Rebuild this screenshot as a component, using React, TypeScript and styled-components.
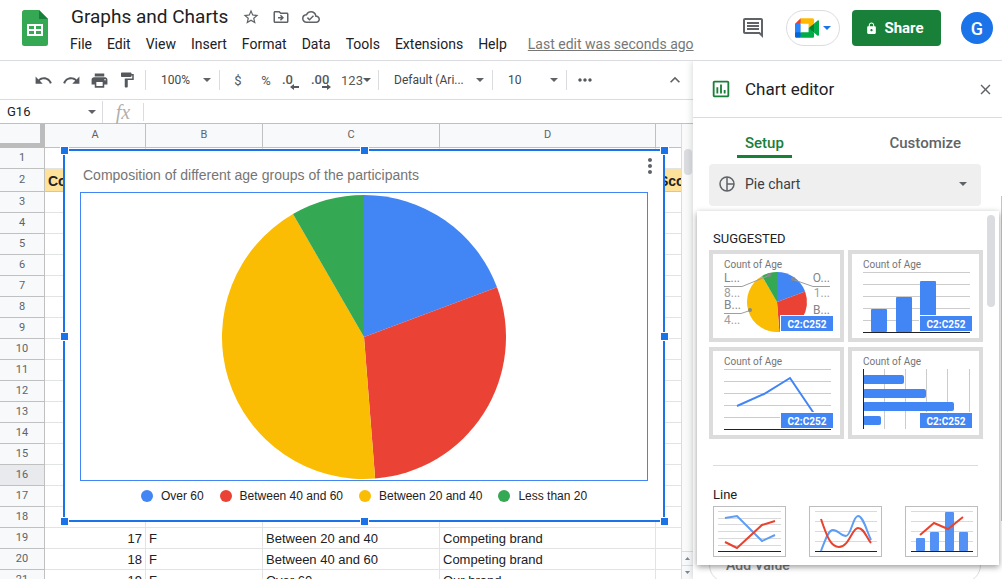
import React from "react";
import styled, { createGlobalStyle } from "styled-components";
import {
  MdClose,
  MdFormatPaint,
  MdKeyboardArrowUp,
  MdLock,
  MdMoreHoriz,
  MdMoreVert,
  MdOutlineCloudDone,
  MdOutlineComment,
  MdOutlineDriveFileMove,
  MdOutlineInsertChart,
  MdPrint,
  MdRedo,
  MdStarBorder,
  MdUndo,
} from "react-icons/md";

const GlobalStyle = createGlobalStyle`
  * { box-sizing: border-box; }
  html, body, #root { height: 100%; margin: 0; }
  body {
    overflow: hidden;
    background: #fff;
    color: #202124;
    font-family: Roboto, "Liberation Sans", sans-serif;
    font-size: 14px;
  }
  button, input, select { font: inherit; color: inherit; }
  svg { display: block; flex-shrink: 0; }
`;

const Page = styled.div`
  display: flex;
  flex-direction: column;
  height: 100vh;
  overflow: hidden;
`;

const PlainButton = styled.button`
  display: flex;
  align-items: center;
  justify-content: center;
  flex-shrink: 0;
  padding: 0;
  border: 0;
  background: none;
  color: #5f6368;
  white-space: nowrap;
`;

/* ---------- header ---------- */

const Header = styled.header`
  display: flex;
  flex-shrink: 0;
  height: 61px;
  padding: 0 9px 0 22px;
  border-bottom: 1px solid #dadce0;
`;

const HomeLink = styled.a`
  padding-top: 10px;
  margin-right: 22px;
`;

const TitleBlock = styled.div`
  flex: 1;
  min-width: 0;
`;

const TitleRow = styled.div`
  display: flex;
  align-items: center;
  gap: 12px;
  height: 34px;
`;

const DocTitle = styled.h1`
  margin: 0 2px 0 1px;
  font-size: 19px;
  font-weight: 400;
  line-height: 34px;
  white-space: nowrap;
`;

const MenuRow = styled.nav`
  display: flex;
  align-items: center;
  gap: 15px;
  height: 20px;
`;

const MenuButton = styled(PlainButton)`
  color: #202124;
  line-height: 20px;
`;

const LastEdit = styled.a`
  margin-left: 6px;
  color: #777;
  line-height: 20px;
  white-space: nowrap;
`;

const HeaderActions = styled.div`
  display: flex;
  align-items: center;
  height: 56px;
`;

const CommentButton = styled(PlainButton)`
  margin-right: 21px;
`;

const MeetButton = styled(PlainButton)`
  gap: 4px;
  width: 54px;
  height: 36px;
  margin-right: 12px;
  border: 1px solid #dadce0;
  border-radius: 18px;
  color: #1a73e8;
`;

const ShareButton = styled(PlainButton)`
  gap: 6px;
  width: 89px;
  height: 36px;
  margin-right: 20px;
  padding-right: 4px;
  border-radius: 4px;
  background: #188038;
  color: #fff;
  font-size: 15px;
  font-weight: 700;
`;

const Avatar = styled(PlainButton)`
  width: 32px;
  height: 32px;
  border-radius: 50%;
  background: #1a73e8;
  color: #fff;
  font-size: 18px;
  font-weight: 500;
`;

/* ---------- workspace ---------- */

const Workspace = styled.div`
  display: flex;
  flex: 1;
  min-height: 0;
`;

const SheetPane = styled.main`
  display: flex;
  flex-direction: column;
  flex: 1;
  min-width: 0;
`;

const Toolbar = styled.div`
  display: flex;
  align-items: center;
  flex-shrink: 0;
  height: 39px;
  padding: 0 8px 0 29px;
  border-bottom: 1px solid #dadce0;
`;

const ToolGroup = styled.div`
  display: flex;
  margin-right: 4px;
`;

const ToolButton = styled(PlainButton)<{ $width?: number }>`
  width: ${(p) => p.$width ?? 28}px;
  height: 28px;
  color: #55585c;
  font-size: 13px;
`;

const Separator = styled.span<{ $height?: number }>`
  flex-shrink: 0;
  width: 1px;
  height: ${(p) => p.$height ?? 20}px;
  background: #dadce0;
`;

const Picker = styled.label<{ $width: number }>`
  display: flex;
  align-items: center;
  flex-shrink: 0;
  width: ${(p) => p.$width}px;
  padding: 0 8px 0 15px;
  color: #5f6368;

  select {
    flex: 1;
    min-width: 0;
    padding: 0;
    border: 0;
    background: none;
    appearance: none;
    color: #444746;
    font-size: 12px;
  }
`;

const ToolbarEnd = styled.div`
  margin-left: auto;
`;

const FormulaBar = styled.div`
  display: flex;
  align-items: center;
  flex-shrink: 0;
  height: 24px;
  border-bottom: 1px solid #c0c0c0;
`;

const NameBox = styled.label`
  display: flex;
  align-items: center;
  width: 102px;
  padding: 0 6px 0 7px;
  color: #5f6368;

  input {
    flex: 1;
    min-width: 0;
    padding: 0;
    border: 0;
    color: #202124;
    font-size: 13px;
  }
`;

const Fx = styled.span`
  width: 40px;
  color: #b0b0b0;
  font-family: "Liberation Serif", serif;
  font-size: 20px;
  font-style: italic;
  line-height: 22px;
  text-align: center;
`;

const FormulaInput = styled.input`
  flex: 1;
  min-width: 0;
  border: 0;
  outline: 0;
`;

const GridArea = styled.div`
  display: flex;
  flex: 1;
  min-height: 0;
`;

const GridViewport = styled.div`
  position: relative;
  flex: 1;
  min-width: 0;
  overflow: hidden;
  border-right: 1px solid #dadce0;
`;

const SheetTable = styled.table`
  width: 782px;
  border-collapse: separate;
  border-spacing: 0;
  table-layout: fixed;
`;

const ColumnHead = styled.th`
  height: 24px;
  padding: 0 0 2px;
  border-right: 1px solid #c0c0c0;
  border-bottom: 1px solid #c0c0c0;
  background: #f8f9fa;
  color: #5f6368;
  font-size: 11px;
  font-weight: 400;
`;

const CornerHead = styled(ColumnHead)`
  border-right: 5px solid #bcbcbc;
  border-bottom: 5px solid #bcbcbc;
`;

const RowHead = styled.th<{ $active?: boolean }>`
  padding: 0 0 2px;
  border-right: 1px solid #c0c0c0;
  border-bottom: 1px solid #c0c0c0;
  background: ${(p) => (p.$active ? "#e8eaed" : "#f8f9fa")};
  color: #5f6368;
  font-size: 11px;
  font-weight: 400;
`;

const SheetRow = styled.tr<{ $tall?: boolean }>`
  height: ${(p) => (p.$tall ? 23 : 21)}px;
`;

const Cell = styled.td<{ $right?: boolean; $title?: boolean }>`
  overflow: hidden;
  padding: 2px 3px 0;
  border-right: 1px solid ${(p) => (p.$title ? "#f3bf80" : "#e2e3e3")};
  border-bottom: 1px solid ${(p) => (p.$title ? "#f3bf80" : "#e2e3e3")};
  background: ${(p) => (p.$title ? "#ffe29a" : "#fff")};
  color: #202124;
  font-family: "Liberation Sans", Arial, sans-serif;
  font-size: ${(p) => (p.$title ? 14 : 13)}px;
  font-weight: ${(p) => (p.$title ? 700 : 400)};
  line-height: 18px;
  text-align: ${(p) => (p.$right ? "right" : "left")};
  white-space: nowrap;
`;

const SheetScroll = styled.div`
  display: flex;
  flex-direction: column;
  justify-content: space-between;
  width: 11px;
  padding-top: 25px;
  background: #fafafa;
`;

const ScrollThumb = styled.div<{ $height: number }>`
  width: 8px;
  height: ${(p) => p.$height}px;
  margin: 0 auto;
  border-radius: 4px;
  background: #dadce0;
`;

const ScrollButton = styled(PlainButton)`
  width: 11px;
  height: 14px;
  border-top: 1px solid #dadce0;
  background: #f8f9fa;
  color: #80868b;
`;

/* ---------- chart floating over the sheet ---------- */

const ChartFrame = styled.section`
  position: absolute;
  left: 64px;
  top: 26px;
  display: flex;
  flex-direction: column;
  width: 600px;
  height: 371px;
  padding: 0 16px;
  outline: 2px solid #1a73e8;
  outline-offset: -1px;
  background: #fff;
`;

const Handle = styled.span<{ $x: number; $y: number }>`
  position: absolute;
  left: ${(p) => p.$x}%;
  top: ${(p) => p.$y}%;
  z-index: 1;
  width: 7px;
  height: 7px;
  margin: -3px;
  background: #1a73e8;
  box-shadow: 0 0 0 1px #fff;
`;

const ChartHeader = styled.div`
  display: flex;
  align-items: center;
  justify-content: space-between;
  height: 42px;
  padding: 8px 0 0 3px;
`;

const ChartTitle = styled.h2`
  margin: 0;
  color: #757575;
  font-family: "Liberation Sans", Arial, sans-serif;
  font-size: 14px;
  font-weight: 400;
  white-space: nowrap;
`;

const ChartMenu = styled(PlainButton)`
  width: 24px;
  height: 24px;
  margin: -18px -14px 0 0;
`;

const PlotArea = styled.div`
  display: flex;
  align-items: center;
  justify-content: center;
  height: 289px;
  border: 1px solid #4285f4;
`;

const Legend = styled.ul`
  display: flex;
  justify-content: center;
  gap: 16px;
  margin: 0;
  padding: 7px 0 0;
  list-style: none;
`;

const LegendItem = styled.li<{ $color: string }>`
  display: flex;
  align-items: center;
  gap: 8px;
  color: #222;
  font-family: "Liberation Sans", Arial, sans-serif;
  font-size: 12px;
  line-height: 16px;
  white-space: nowrap;

  &::before {
    content: "";
    width: 12px;
    height: 12px;
    border-radius: 50%;
    background: ${(p) => p.$color};
  }
`;

/* ---------- chart editor ---------- */

const Sidebar = styled.aside`
  position: relative;
  display: flex;
  flex-direction: column;
  flex-shrink: 0;
  width: 309px;
  background: #fff;
  box-shadow: 0 0 7px rgba(60, 64, 67, 0.25);
  clip-path: inset(0 0 0 -12px);
`;

const SidebarHeader = styled.div`
  display: flex;
  align-items: center;
  flex-shrink: 0;
  height: 57px;
  padding: 0 8px 0 17px;
  border-bottom: 1px solid #dadce0;
  color: #188038;
`;

const SidebarTitle = styled.h2`
  flex: 1;
  margin: 0 0 0 13px;
  color: #202124;
  font-size: 17px;
  font-weight: 400;
`;

const Tabs = styled.div`
  display: flex;
  flex-shrink: 0;
  justify-content: space-between;
  height: 46px;
  padding: 8px 33px 6px 44px;
`;

const Tab = styled(PlainButton)<{ $active?: boolean }>`
  padding: 4px 8px 0;
  border-bottom: 3px solid ${(p) => (p.$active ? "#188038" : "transparent")};
  color: ${(p) => (p.$active ? "#188038" : "#5f6368")};
  font-size: 15px;
  font-weight: 500;
`;

const TypeSelect = styled.label`
  display: flex;
  align-items: center;
  flex-shrink: 0;
  gap: 10px;
  height: 42px;
  margin: 0 21px 0 16px;
  padding: 0 14px 2px 10px;
  border-radius: 4px;
  background: #efefef;
  color: #5f6368;

  select {
    flex: 1;
    min-width: 0;
    padding: 0;
    border: 0;
    background: none;
    appearance: none;
    color: #3c4043;
    font-size: 14px;
  }
`;

const SeriesSection = styled.div`
  display: flex;
  flex: 1;
  flex-direction: column;
  min-height: 372px;
  padding: 341px 21px 0 16px;
`;

const AddValue = styled(PlainButton)`
  justify-content: flex-start;
  height: 36px;
  padding: 0 16px;
  border: 1px solid #dadce0;
  border-radius: 18px;
  color: #777;
  font-size: 14px;
  font-weight: 500;
`;

const SidebarThumb = styled.div`
  position: absolute;
  top: 135px;
  right: 0;
  width: 1px;
  height: 325px;
  background: #c4c4c4;
`;

const TypeMenu = styled.div`
  position: absolute;
  top: 150px;
  left: 4px;
  right: 3px;
  display: flex;
  height: 354px;
  overflow: hidden;
  padding: 0 4px 0 12px;
  background: #fff;
  box-shadow: 0 2px 6px rgba(0, 0, 0, 0.4);
  clip-path: inset(-8px -12px -12px -12px);
`;

const MenuContent = styled.div`
  flex: 1;
  padding-top: 18px;
`;

const MenuScroll = styled.div`
  padding-top: 4px;
`;

const MenuHeading = styled.h3`
  margin: 0 0 2px 4px;
  font-size: 13px;
  font-weight: 400;
  line-height: 19px;
`;

const SuggestedGrid = styled.div`
  display: grid;
  grid-template-columns: 135px 135px;
  gap: 5px 4px;
`;

const Suggestion = styled.button`
  position: relative;
  height: 92px;
  padding: 0;
  border: 4px solid #dcdcdc;
  background: #fff;
`;

const RangeBadge = styled.span`
  position: absolute;
  right: 7px;
  bottom: 7px;
  width: 52px;
  height: 15px;
  background: #4285f4;
  box-shadow: 0 0 0 1px #fff;
  color: #fff;
  font-size: 10px;
  font-weight: 700;
  line-height: 17px;
  text-align: center;
`;

const Divider = styled.hr`
  width: 265px;
  margin: 26px 0 19px 4px;
  border: 0;
  border-top: 1px solid #dadce0;
`;

const ThumbRow = styled.div`
  display: flex;
  justify-content: space-between;
  width: 265px;
  margin-left: 4px;
`;

const Thumb = styled.button`
  width: 73px;
  height: 51px;
  padding: 0;
  border: 1px solid #bdbdbd;
  background: #fff;
`;

/* ---------- drawings ---------- */

const BLUE = "#4285f4";
const RED = "#ea4335";
const YELLOW = "#fbbc04";
const GREEN = "#34a853";

const SLICES = [
  { label: "Over 60", color: BLUE, from: 0, to: 69.5 },
  { label: "Between 40 and 60", color: RED, from: 69.5, to: 175.5 },
  { label: "Between 20 and 40", color: YELLOW, from: 175.5, to: 330 },
  { label: "Less than 20", color: GREEN, from: 330, to: 360 },
];

function slicePath(cx: number, cy: number, r: number, from: number, to: number) {
  const point = (deg: number) => {
    const a = (deg * Math.PI) / 180;
    return `${(cx + r * Math.sin(a)).toFixed(2)} ${(cy - r * Math.cos(a)).toFixed(2)}`;
  };
  return `M${cx} ${cy}L${point(from)}A${r} ${r} 0 ${to - from > 180 ? 1 : 0} 1 ${point(to)}Z`;
}

function Slices({ cx, cy, r }: { cx: number; cy: number; r: number }) {
  return (
    <>
      {SLICES.map((s) => (
        <path key={s.label} d={slicePath(cx, cy, r, s.from, s.to)} fill={s.color} />
      ))}
    </>
  );
}

function Caret() {
  return (
    <svg width="8" height="4" viewBox="0 0 8 4" aria-hidden="true">
      <path d="M0 0h8L4 4z" fill="currentColor" />
    </svg>
  );
}

function SheetsLogo() {
  return (
    <svg width="26" height="36" viewBox="0 0 26 36" aria-label="Sheets home">
      <path d="M2.500 0H17l9 9v24.500a2.500 2.500 0 0 1-2.500 2.500h-21A2.500 2.500 0 0 1 0 33.500v-31A2.500 2.500 0 0 1 2.500 0z" fill="#34a853" />
      <path d="M17 0l9 9h-9z" fill="#188038" />
      <path d="M5 14h16v12H5zm2 2v3h5v-3zm7 0v3h5v-3zm-7 5v3h5v-3zm7 0v3h5v-3z" fill="#fff" fillRule="evenodd" />
    </svg>
  );
}

function MeetLogo() {
  return (
    <svg width="24" height="20" viewBox="0 0 87.500 72" aria-hidden="true">
      <path fill="#00832d" d="M49.500 36l8.530 9.750 11.470 7.330 2-17.020-2-16.640-11.690 6.440z" />
      <path fill="#0066da" d="M0 51.500V66c0 3.315 2.685 6 6 6h14.500l3-10.960-3-9.540-9.950-3z" />
      <path fill="#e94235" d="M20.500 0L0 20.500l10.550 3 9.950-3 2.950-9.410z" />
      <path fill="#2684fc" d="M20.500 20.500H0v31h20.500z" />
      <path fill="#00ac47" d="M82.600 8.680L69.500 19.420v33.660l13.160 10.790c1.970 1.540 4.850.135 4.850-2.370V11c0-2.535-2.945-3.925-4.910-2.320zM49.500 36v15.500h-29V72h43c3.315 0 6-2.685 6-6V53.080z" />
      <path fill="#ffba00" d="M63.500 0h-43v20.500h29V36l20-16.570V6c0-3.315-2.685-6-6-6z" />
    </svg>
  );
}

function DecimalIcon({ digits, more }: { digits: string; more?: boolean }) {
  return (
    <svg width="22" height="20" viewBox="0 0 22 20" fill="currentColor" aria-hidden="true">
      <text x="2" y="14" fontFamily="Roboto, sans-serif" fontSize="13" fontWeight="500">
        {digits}
      </text>
      {more ? (
        <path d="M13 16h5v-2l4 3-4 3v-2h-5z" />
      ) : (
        <path d="M19 16h-5v-2l-4 3 4 3v-2h5z" />
      )}
    </svg>
  );
}

function PieOutline() {
  return (
    <svg width="16" height="16" viewBox="0 0 16 16" fill="none" stroke="currentColor" strokeWidth="1.500" aria-hidden="true">
      <circle cx="8" cy="8" r="7" />
      <path d="M8 1v14M8 8h7" />
    </svg>
  );
}

function CardTitle() {
  return (
    <text x="11" y="14" fill="#757575" fontFamily="Roboto, sans-serif" fontSize="10">
      Count of Age
    </text>
  );
}

function PieCard() {
  return (
    <svg width="127" height="84" viewBox="0 0 127 84">
      <CardTitle />
      <Slices cx={64} cy={48} r={30} />
      <g stroke="#9e9e9e" fill="none">
        <path d="M11 32.500H29L56 21.500M11 59.500H28L37 56.500M117 32.500H100L80 25.500" />
      </g>
      <g fill="#8a8a8a">
        <circle cx="56" cy="21" r="2" />
        <circle cx="37" cy="56" r="2" />
        <circle cx="80" cy="25" r="2" />
      </g>
      <g fill="#80868b" fontFamily="Roboto, sans-serif" fontSize="12">
        <text x="11" y="28">L...</text>
        <text x="11" y="43" fill="#9e9e9e">8...</text>
        <text x="11" y="55">B...</text>
        <text x="11" y="70" fill="#9e9e9e">4...</text>
        <text x="117" y="28" textAnchor="end">O...</text>
        <text x="117" y="43" textAnchor="end" fill="#9e9e9e">1...</text>
        <text x="117" y="60" textAnchor="end">B...</text>
      </g>
    </svg>
  );
}

const GRID_ROWS = "M11 18.500h107M11 30.500h107M11 42.500h107M11 54.500h107M11 66.500h107";

function ColumnCard() {
  return (
    <svg width="127" height="84" viewBox="0 0 127 84">
      <CardTitle />
      <path d={GRID_ROWS} stroke="#ccc" />
      <g fill={BLUE}>
        <rect x="19" y="55" width="16" height="23" rx="1" />
        <rect x="44" y="43" width="16" height="35" rx="1" />
        <rect x="68" y="27" width="16" height="51" rx="1" />
      </g>
      <path d="M11 78.500h107" stroke="#222" />
    </svg>
  );
}

function LineCard() {
  return (
    <svg width="127" height="84" viewBox="0 0 127 84">
      <CardTitle />
      <path d={GRID_ROWS} stroke="#ccc" />
      <path d="M11 78.500h107" stroke="#222" />
      <path d="M24 55L51 43L77 27L102 64" stroke={BLUE} strokeWidth="2" fill="none" />
    </svg>
  );
}

function BarCard() {
  return (
    <svg width="127" height="84" viewBox="0 0 127 84">
      <CardTitle />
      <path d="M32.500 18v60M53.500 18v60M74.500 18v60M95.500 18v60M117.500 18v60" stroke="#ccc" />
      <g fill={BLUE}>
        <rect x="11" y="24" width="41" height="9" rx="2" />
        <rect x="11" y="38" width="63" height="9" rx="2" />
        <rect x="11" y="51" width="91" height="9" rx="2" />
        <rect x="11" y="65" width="18" height="9" rx="2" />
      </g>
      <path d="M11.500 18v60" stroke="#222" />
    </svg>
  );
}

function LineThumb() {
  return (
    <svg width="71" height="49" viewBox="0 0 71 49" fill="none">
      <path d="M4 4.500h63M4 11.500h63M4 17.500h63M4 24.500h63M4 31.500h63M4 38.500h63" stroke="#dadada" />
      <path d="M4 44.500h63" stroke="#222" />
      <path d="M11 11L23 9L48 34L61 28" stroke="#5e9cf5" strokeWidth="2" />
      <path d="M11 35L23 41L48 18L61 14" stroke="#e8432f" strokeWidth="2" />
    </svg>
  );
}

function SmoothThumb() {
  return (
    <svg width="71" height="49" viewBox="0 0 71 49" fill="none">
      <path d="M5 4.500h62M5 14.500h62M5 24.500h62M5 34.500h62" stroke="#dadada" />
      <path d="M5 44.500h62" stroke="#222" />
      <path d="M11 44C15 34 18 23 23 23S31 29 36 29S43 9 48 9S56 22 61 33" stroke="#5e9cf5" strokeWidth="2" />
      <path d="M11 12C17 30 21 40 29 40C39 40 42 21 48 21S56 30 61 36" stroke="#e8432f" strokeWidth="2" />
    </svg>
  );
}

function ComboThumb() {
  return (
    <svg width="71" height="49" viewBox="0 0 71 49" fill="none">
      <path d="M5 4.500h62M5 14.500h62M5 24.500h62M5 34.500h62" stroke="#dadada" />
      <g fill="#5491f5">
        <rect x="10" y="31" width="9" height="13" rx="1" />
        <rect x="24" y="25" width="9" height="19" rx="1" />
        <rect x="39" y="5" width="9" height="39" rx="1" />
        <rect x="53" y="25" width="9" height="19" rx="1" />
      </g>
      <path d="M5 44.500h62" stroke="#222" />
      <path d="M14 28L28 16L42 22L57 10" stroke="#e8432f" strokeWidth="2" />
    </svg>
  );
}

/* ---------- data ---------- */

const MENUS = ["File", "Edit", "View", "Insert", "Format", "Data", "Tools", "Extensions", "Help"];

const ROW_DATA: Record<number, string[]> = {
  2: ["Code", "", "", "", "Score"],
  19: ["17", "F", "Between 20 and 40", "Competing brand", ""],
  20: ["18", "F", "Between 40 and 60", "Competing brand", ""],
  21: ["19", "F", "Over 60", "Our brand", ""],
};

const HANDLES = [
  [0, 0], [50, 0], [100, 0],
  [0, 50], [100, 50],
  [0, 100], [50, 100], [100, 100],
];

function Sheet() {
  const rows = Array.from({ length: 21 }, (_, i) => i + 1);
  return (
    <SheetTable>
      <colgroup>
        <col style={{ width: 45 }} />
        <col style={{ width: 101 }} />
        <col style={{ width: 117 }} />
        <col style={{ width: 177 }} />
        <col style={{ width: 216 }} />
        <col style={{ width: 126 }} />
      </colgroup>
      <thead>
        <tr>
          <CornerHead aria-label="Select all" />
          {["A", "B", "C", "D", ""].map((c, i) => (
            <ColumnHead key={i} scope="col">{c}</ColumnHead>
          ))}
        </tr>
      </thead>
      <tbody>
        {rows.map((n) => (
          <SheetRow key={n} $tall={n === 2}>
            <RowHead scope="row" $active={n === 16}>{n}</RowHead>
            {(ROW_DATA[n] ?? ["", "", "", "", ""]).map((value, i) => (
              <Cell key={i} $title={n === 2} $right={n > 2 && i === 0}>{value}</Cell>
            ))}
          </SheetRow>
        ))}
      </tbody>
    </SheetTable>
  );
}

function FloatingChart() {
  return (
    <ChartFrame aria-label="Chart">
      <ChartHeader>
        <ChartTitle>Composition of different age groups of the participants</ChartTitle>
        <ChartMenu aria-label="Chart menu"><MdMoreVert size={24} /></ChartMenu>
      </ChartHeader>
      <PlotArea>
        <svg width="284" height="284" viewBox="0 0 284 284" role="img" aria-label="Pie chart of age groups">
          <Slices cx={142} cy={142} r={142} />
        </svg>
      </PlotArea>
      <Legend>
        {SLICES.map((s) => (
          <LegendItem key={s.label} $color={s.color}>{s.label}</LegendItem>
        ))}
      </Legend>
      {HANDLES.map(([x, y]) => (
        <Handle key={`${x}-${y}`} $x={x} $y={y} />
      ))}
    </ChartFrame>
  );
}

function ChartEditor() {
  return (
    <Sidebar>
      <SidebarHeader>
        <MdOutlineInsertChart size={22} />
        <SidebarTitle>Chart editor</SidebarTitle>
        <PlainButton aria-label="Close"><MdClose size={17} /></PlainButton>
      </SidebarHeader>
      <Tabs role="tablist">
        <Tab role="tab" aria-selected="true" $active>Setup</Tab>
        <Tab role="tab" aria-selected="false">Customize</Tab>
      </Tabs>
      <TypeSelect>
        <PieOutline />
        <select aria-label="Chart type" defaultValue="Pie chart">
          <option>Pie chart</option>
        </select>
        <Caret />
      </TypeSelect>
      <SeriesSection>
        <AddValue>Add Value</AddValue>
      </SeriesSection>
      <SidebarThumb />
      <TypeMenu>
        <MenuContent>
          <MenuHeading>SUGGESTED</MenuHeading>
          <SuggestedGrid>
            {[PieCard, ColumnCard, LineCard, BarCard].map((Drawing, i) => (
              <Suggestion key={i}>
                <Drawing />
                <RangeBadge>C2:C252</RangeBadge>
              </Suggestion>
            ))}
          </SuggestedGrid>
          <Divider />
          <MenuHeading>Line</MenuHeading>
          <ThumbRow>
            <Thumb aria-label="Line chart"><LineThumb /></Thumb>
            <Thumb aria-label="Smooth line chart"><SmoothThumb /></Thumb>
            <Thumb aria-label="Combo chart"><ComboThumb /></Thumb>
          </ThumbRow>
        </MenuContent>
        <MenuScroll>
          <ScrollThumb $height={92} />
        </MenuScroll>
      </TypeMenu>
    </Sidebar>
  );
}

export default function App() {
  return (
    <>
      <GlobalStyle />
      <Page>
        <Header>
          <HomeLink href="#"><SheetsLogo /></HomeLink>
          <TitleBlock>
            <TitleRow>
              <DocTitle>Graphs and Charts</DocTitle>
              <PlainButton aria-label="Star"><MdStarBorder size={18} /></PlainButton>
              <PlainButton aria-label="Move"><MdOutlineDriveFileMove size={18} /></PlainButton>
              <PlainButton aria-label="Saved to Drive"><MdOutlineCloudDone size={18} /></PlainButton>
            </TitleRow>
            <MenuRow>
              {MENUS.map((m) => (
                <MenuButton key={m}>{m}</MenuButton>
              ))}
              <LastEdit href="#">Last edit was seconds ago</LastEdit>
            </MenuRow>
          </TitleBlock>
          <HeaderActions>
            <CommentButton aria-label="Comments"><MdOutlineComment size={24} /></CommentButton>
            <MeetButton aria-label="Join a call"><MeetLogo /><Caret /></MeetButton>
            <ShareButton><MdLock size={13} />Share</ShareButton>
            <Avatar aria-label="Account">G</Avatar>
          </HeaderActions>
        </Header>
        <Workspace>
          <SheetPane>
            <Toolbar>
              <ToolGroup>
                <ToolButton aria-label="Undo"><MdUndo size={19} /></ToolButton>
                <ToolButton aria-label="Redo"><MdRedo size={19} /></ToolButton>
                <ToolButton aria-label="Print"><MdPrint size={19} /></ToolButton>
                <ToolButton aria-label="Paint format"><MdFormatPaint size={18} /></ToolButton>
              </ToolGroup>
              <Separator />
              <Picker $width={73}>
                <select aria-label="Zoom" defaultValue="100%"><option>100%</option></select>
                <Caret />
              </Picker>
              <Separator />
              <ToolButton $width={36} aria-label="Currency">$</ToolButton>
              <ToolButton $width={20} aria-label="Percent">%</ToolButton>
              <ToolButton $width={30} aria-label="Fewer decimals"><DecimalIcon digits=".0" /></ToolButton>
              <ToolButton aria-label="More decimals"><DecimalIcon digits=".00" more /></ToolButton>
              <ToolButton $width={44} aria-label="Number format">123<Caret /></ToolButton>
              <Separator />
              <Picker $width={113}>
                <select aria-label="Font" defaultValue="Default (Ari..."><option>Default (Ari...</option></select>
                <Caret />
              </Picker>
              <Separator />
              <Picker $width={73}>
                <select aria-label="Font size" defaultValue="10"><option>10</option></select>
                <Caret />
              </Picker>
              <Separator />
              <ToolButton $width={36} aria-label="More"><MdMoreHoriz size={20} /></ToolButton>
              <ToolbarEnd>
                <PlainButton aria-label="Hide menus"><MdKeyboardArrowUp size={20} /></PlainButton>
              </ToolbarEnd>
            </Toolbar>
            <FormulaBar>
              <NameBox>
                <input aria-label="Name box" defaultValue="G16" />
                <Caret />
              </NameBox>
              <Separator $height={22} />
              <Fx>fx</Fx>
              <Separator $height={18} />
              <FormulaInput aria-label="Formula" />
            </FormulaBar>
            <GridArea>
              <GridViewport>
                <Sheet />
                <FloatingChart />
              </GridViewport>
              <SheetScroll>
                <ScrollThumb $height={26} />
                <div>
                  <ScrollButton aria-label="Scroll up">
                    <svg width="5" height="3" viewBox="0 0 5 3"><path d="M0 3h5L2.500 0z" fill="currentColor" /></svg>
                  </ScrollButton>
                  <ScrollButton aria-label="Scroll down">
                    <svg width="5" height="3" viewBox="0 0 5 3"><path d="M0 0h5L2.500 3z" fill="currentColor" /></svg>
                  </ScrollButton>
                </div>
              </SheetScroll>
            </GridArea>
          </SheetPane>
          <ChartEditor />
        </Workspace>
      </Page>
    </>
  );
}
